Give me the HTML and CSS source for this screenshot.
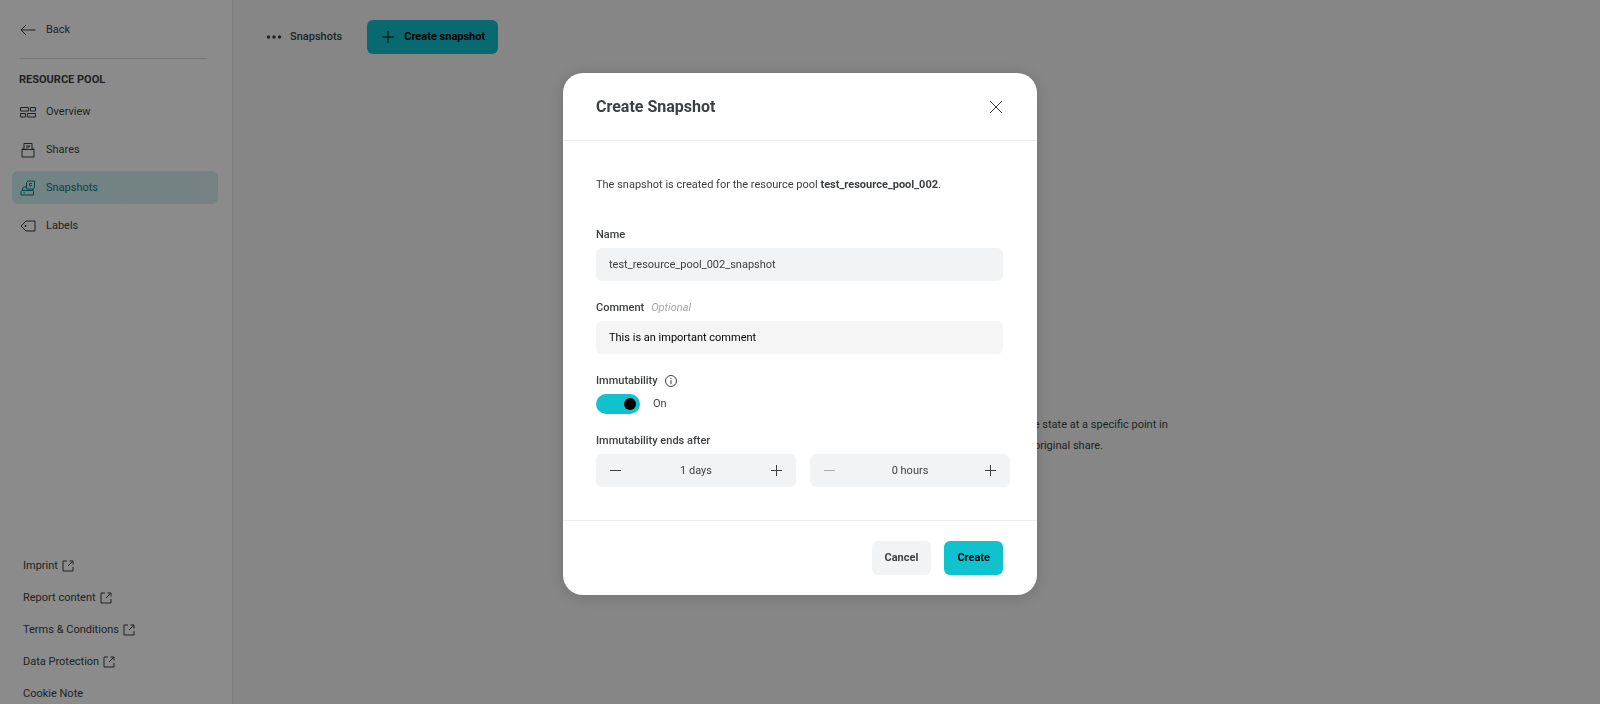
FILE: index.html
```
<!DOCTYPE html>
<html lang="en">
<head>
  <meta charset="UTF-8" />
  <meta name="viewport" content="width=device-width, initial-scale=1.0" />
  <title>Create Snapshot</title>
  <link rel="stylesheet" href="styles.css">
</head>
<body>
  <div class="page">
    <aside class="sidebar">
      <a class="back" href="#">
        <svg class="icon" viewBox="0 0 16 16"><path d="M15.5 8H1M6 3L1 8l5 5" /></svg>
        Back
      </a>
      <h2 class="sidebar-title">Resource pool</h2>
      <nav class="nav">
        <a class="nav-item" href="#">
          <svg class="icon" viewBox="0 0 16 16"><path d="M.5 3.500h8v3.500h-8zM10.500 3.500h5v3.500h-5zM.5 9.500h5V13h-5zM7.500 9.500h8V13h-8z" /></svg>
          Overview
        </a>
        <a class="nav-item" href="#">
          <svg class="icon" viewBox="0 0 16 16"><path d="M2 7.500h12v7.500H2zM2 7.500l2-2M14 7.500l-2-2M4 7.500V1.500h8v6M6 4h4M6 6h1.500l2-2" /></svg>
          Shares
        </a>
        <a class="nav-item active" href="#">
          <svg class="icon" viewBox="0 0 16 16"><path d="M1 11.500l1-1h11l.5 1v3.500H1zM2 10.500L3.500 7H6M6.500 9V2.500L8 1h6.500v6.500L13 9H6.500M13 9v2M3.500 13h1.500M12 3.500H9.500V6H11l1-1" /></svg>
          Snapshots
        </a>
        <a class="nav-item" href="#">
          <svg class="icon" viewBox="0 0 16 16"><path d="M6 3h9v10H6L1 8z" /><circle class="dot" cx="5.500" cy="8" r="1" /></svg>
          Labels
        </a>
      </nav>
      <div class="links">
        <a href="#">Imprint <svg class="icon-ext" viewBox="0 0 12 12"><path d="M5 1H1v10h10V7M7.500 1H11v3.500M11 1L6 6" /></svg></a>
        <a href="#">Report content <svg class="icon-ext" viewBox="0 0 12 12"><path d="M5 1H1v10h10V7M7.500 1H11v3.500M11 1L6 6" /></svg></a>
        <a href="#">Terms &amp; Conditions <svg class="icon-ext" viewBox="0 0 12 12"><path d="M5 1H1v10h10V7M7.500 1H11v3.500M11 1L6 6" /></svg></a>
        <a href="#">Data Protection <svg class="icon-ext" viewBox="0 0 12 12"><path d="M5 1H1v10h10V7M7.500 1H11v3.500M11 1L6 6" /></svg></a>
        <a href="#">Cookie Note</a>
      </div>
    </aside>

    <main class="main">
      <div class="toolbar">
        <button class="crumb" type="button">
          <svg class="icon" viewBox="0 0 16 16"><circle class="dot" cx="2.500" cy="8" r="1.700" /><circle class="dot" cx="8" cy="8" r="1.700" /><circle class="dot" cx="13.500" cy="8" r="1.700" /></svg>
          Snapshots
        </button>
        <button class="btn btn-primary" type="button">
          <svg class="icon" viewBox="0 0 16 16"><path d="M8 2v12M2 8h12" /></svg>
          Create snapshot
        </button>
      </div>
      <p class="empty">A snapshot is a read-only copy of all of the data in this share. It preserves the state at a specific point in<br>time and is always stored separately from all other data of the original share.</p>
    </main>
  </div>

  <div class="overlay">
    <form class="modal" role="dialog" aria-labelledby="modal-title">
      <header class="modal-header">
        <h1 id="modal-title">Create Snapshot</h1>
        <button class="close" type="button" aria-label="Close">
          <svg viewBox="0 0 14 14"><path d="M1 1l12 12M13 1L1 13" /></svg>
        </button>
      </header>

      <div class="modal-body">
        <p class="intro">The snapshot is created for the resource pool <strong>test_resource_pool_002</strong>.</p>

        <div class="field">
          <label for="name">Name</label>
          <input class="text-input" type="text" id="name" value="test_resource_pool_002_snapshot" readonly />
        </div>

        <div class="field">
          <label for="comment">Comment <em>Optional</em></label>
          <input class="text-input comment" type="text" id="comment" value="This is an important comment" />
        </div>

        <div class="field">
          <label for="immutability">Immutability
            <svg class="icon-info" viewBox="0 0 12 12"><circle cx="6" cy="6" r="5.500" /><path d="M6 5v4M6 3v1" /></svg>
          </label>
          <div class="switch-row">
            <input class="switch" type="checkbox" id="immutability" checked />
            <span>On</span>
          </div>
        </div>

        <div class="field">
          <label for="days">Immutability ends after</label>
          <div class="steppers">
            <div class="stepper">
              <button type="button" aria-label="Fewer days"><svg viewBox="0 0 11 11"><path d="M0 5.500h11" /></svg></button>
              <input type="text" id="days" value="1 days" />
              <button type="button" aria-label="More days"><svg viewBox="0 0 11 11"><path d="M0 5.500h11M5.500 0v11" /></svg></button>
            </div>
            <div class="stepper">
              <button type="button" aria-label="Fewer hours" disabled><svg viewBox="0 0 11 11"><path d="M0 5.500h11" /></svg></button>
              <input type="text" id="hours" value="0 hours" aria-label="Hours" />
              <button type="button" aria-label="More hours"><svg viewBox="0 0 11 11"><path d="M0 5.500h11M5.500 0v11" /></svg></button>
            </div>
          </div>
        </div>
      </div>

      <footer class="modal-footer">
        <button class="btn" type="button">Cancel</button>
        <button class="btn btn-primary" type="submit">Create</button>
      </footer>
    </form>
  </div>
</body>
</html>
```
FILE: styles.css
```
* { box-sizing: border-box; }
body { margin: 0; font-family: Roboto, "Liberation Sans", sans-serif; font-size: 11px; line-height: 20px; color: #3c3f42; background: #f6f6f6; }
h1, h2, p { margin: 0; }
a { color: inherit; text-decoration: none; }
button, input { font: inherit; color: inherit; border: none; margin: 0; }
button { cursor: pointer; background: none; padding: 0; }
svg { fill: none; stroke: currentColor; stroke-width: 1; flex: none; }
.dot { fill: currentColor; stroke: none; }
.icon { width: 16px; height: 16px; }

.page { display: flex; height: 100vh; overflow: hidden; }

/* sidebar */
.sidebar { width: 233px; flex: none; display: flex; flex-direction: column; padding: 0 14px 2px 12px; background: #fff; border-right: 1px solid #e8e8e8; }
.back { display: flex; align-items: center; gap: 10px; height: 59px; margin: 0 11px 0 8px; padding-top: 2px; border-bottom: 1px solid #dcdcdc; }
.sidebar-title { margin: 11px 7px 5px; font-size: 11px; font-weight: 700; line-height: 20px; text-transform: uppercase; }
.nav { display: flex; flex-direction: column; gap: 5px; }
.nav-item { display: flex; align-items: center; gap: 10px; height: 33px; padding: 0 8px; border-radius: 6px; }
.nav-item.active { color: #087d80; background: linear-gradient(90deg, #cdf3f4, #d8edf0); }
.links { display: flex; flex-direction: column; align-items: flex-start; gap: 16px; margin-top: auto; padding-left: 11px; }
.links a { display: flex; align-items: center; gap: 4px; line-height: 16px; }
.icon-ext { width: 12px; height: 12px; }

/* content */
.main { flex: 1; display: flex; flex-direction: column; }
.toolbar { display: flex; align-items: center; gap: 25px; padding: 20px 33px; }
.crumb { display: flex; align-items: center; gap: 8px; font-weight: 500; }
.empty { margin: 340px auto 0; line-height: 21px; text-align: center; }

.btn { display: flex; align-items: center; justify-content: center; gap: 8px; height: 34px; padding: 0 13px; border-radius: 6px; background: #f1f3f4; font-weight: 700; }
.btn-primary { background: #10c2cd; color: #000; }

/* modal */
.overlay { position: fixed; inset: 0; display: flex; justify-content: center; align-items: flex-start; padding-top: 73px; background: rgba(0,0,0,0.455); }
.modal { width: 474px; max-width: 100%; background: #fff; border-radius: 20px; box-shadow: 0 2px 16px rgba(0,0,0,0.16); }
.modal-header { display: flex; align-items: center; justify-content: space-between; padding: 24px 34px 23px 33px; border-bottom: 1px solid #ececec; }
.modal-header h1 { font-size: 16px; font-weight: 700; line-height: 20px; }
.close { display: flex; }
.close svg { width: 14px; height: 14px; }
.modal-body { display: flex; flex-direction: column; gap: 17px; padding: 34px 34px 33px 33px; }
.intro { margin-bottom: 13px; }
.field { display: flex; flex-direction: column; gap: 3px; }
.field label { display: flex; align-items: center; gap: 7px; font-weight: 500; }
.field em { color: #a4a6a8; font-weight: 400; }
.icon-info { width: 12px; height: 12px; }
.text-input { width: 100%; height: 33px; padding: 0 13px; border-radius: 6px; background: #f1f3f4; }
.comment { background: #f5f5f5; color: #000; }

.switch-row { display: flex; align-items: center; gap: 13px; }
.switch { appearance: none; display: flex; align-items: center; justify-content: flex-end; width: 44px; height: 20px; padding: 4px; border-radius: 10px; background: #10c2cd; }
.switch::before { content: ""; width: 12px; height: 12px; border-radius: 50%; background: #000; }
.switch:not(:checked) { justify-content: flex-start; background: #d5d8da; }

.steppers { display: flex; gap: 14px; margin-right: -7px; }
.stepper { flex: 1; min-width: 0; display: flex; align-items: center; height: 33px; border-radius: 6px; background: #f1f3f4; }
.stepper input { flex: 1; min-width: 0; padding: 0; background: none; text-align: center; }
.stepper button { display: flex; align-items: center; justify-content: center; width: 39px; height: 33px; }
.stepper button:disabled { opacity: 0.4; }
.stepper svg { width: 11px; height: 11px; }

.modal-footer { display: flex; justify-content: flex-end; gap: 13px; padding: 20px 34px 20px 33px; border-top: 1px solid #ececec; }
```
